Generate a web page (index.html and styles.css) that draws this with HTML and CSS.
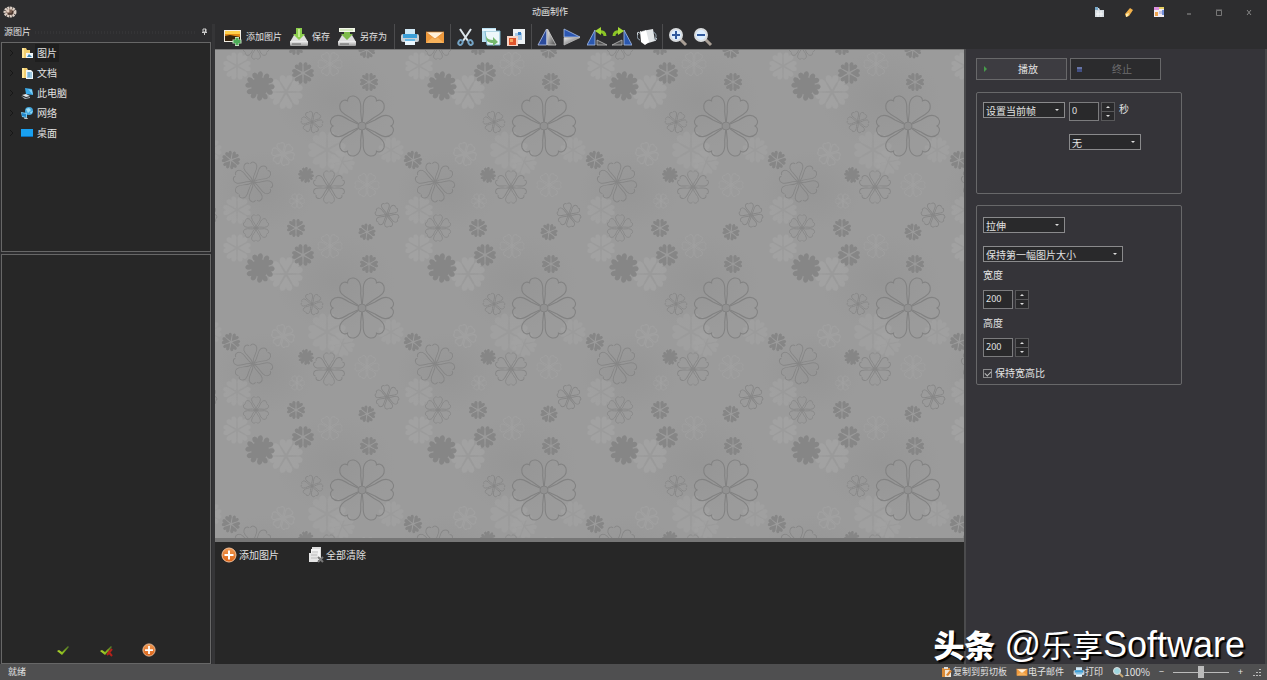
FILE: index.html
```html
<!DOCTYPE html>
<html lang="zh-CN">
<head>
<meta charset="utf-8">
<title>动画制作</title>
<link rel="stylesheet" href="styles.css">
</head>
<body>
<svg class="defs" aria-hidden="true">
  <defs>
    <linearGradient id="silver" x1="0" y1="0" x2="0" y2="1"><stop offset="0" stop-color="#f4f4f4"/><stop offset="1" stop-color="#999"/></linearGradient>
    <linearGradient id="orange" x1="0" y1="0" x2="0" y2="1"><stop offset="0" stop-color="#f09a54"/><stop offset="1" stop-color="#dc6215"/></linearGradient>
    <linearGradient id="half" x1="0" y1="0" x2="1" y2="1"><stop offset="0" stop-color="#eee"/><stop offset="1" stop-color="#444"/></linearGradient>
    <linearGradient id="tick" x1="0" y1="0" x2="1" y2="0"><stop offset="0" stop-color="#b5dc2c"/><stop offset=".6" stop-color="#7fb11d"/><stop offset="1" stop-color="#4c6b2c"/></linearGradient>
    <path id="petal" d="M4 0L17-8C23-14 32-12 31-6C31-3 28-1 25 0C28 1 31 3 31 6C32 12 23 14 17 8Z"/>
    <path id="heart" d="M2 1L13 6C19 10 25 13 30 8C33 4 31 1 29 0C31-1 33-4 30-8C25-13 19-10 13-6L2-1"/>
    <path id="hook" d="M0 0C12-1 14-9 23-10C29-10 32-4 28-1M0 0C12 1 14 9 23 10C29 10 32 4 28 1"/>
    <g id="bloom">
      <use href="#petal"/><use href="#petal" transform="rotate(60)"/><use href="#petal" transform="rotate(120)"/><use href="#petal" transform="rotate(180)"/><use href="#petal" transform="rotate(240)"/><use href="#petal" transform="rotate(300)"/>
    </g>
    <g id="hearts">
      <use href="#heart"/><use href="#heart" transform="rotate(60)"/><use href="#heart" transform="rotate(120)"/><use href="#heart" transform="rotate(180)"/><use href="#heart" transform="rotate(240)"/><use href="#heart" transform="rotate(300)"/>
    </g>
    <g id="sprig">
      <use href="#hook"/><use href="#hook" transform="rotate(60)"/><use href="#hook" transform="rotate(120)"/><use href="#hook" transform="rotate(180)"/><use href="#hook" transform="rotate(240)"/><use href="#hook" transform="rotate(300)"/>
    </g>
    <radialGradient id="shade"><stop offset="0" stop-color="#8e8e8e" stop-opacity=".4"/><stop offset="1" stop-color="#8e8e8e" stop-opacity="0"/></radialGradient>
    <pattern id="flowers" width="182" height="182" patternUnits="userSpaceOnUse">
      <rect width="182" height="182" fill="#9b9b9b"/>
      <ellipse cx="120" cy="50" rx="60" ry="48" fill="url(#shade)"/>
      <ellipse cx="50" cy="141" rx="50" ry="40" fill="url(#shade)"/>
      <g fill="#a6a6a6" opacity=".6">
        <use href="#bloom" transform="translate(22 16) scale(.44)"/>
        <use href="#bloom" transform="translate(71 42) rotate(30) scale(.54)"/>
        <use href="#bloom" transform="translate(112 100) scale(.6)" opacity=".7"/>
        <use href="#bloom" transform="translate(127 112) rotate(20) scale(.4)" opacity=".7"/>
        <use href="#bloom" transform="translate(176 100) scale(.4)" opacity=".7"/>
        <use href="#bloom" transform="translate(-6 100) scale(.4)" opacity=".7"/>
        <use href="#bloom" transform="translate(22 160) scale(.44)" opacity=".8"/>
      </g>
      <g fill="none" stroke="#a6a6a6" opacity=".5">
        <use href="#sprig" transform="translate(68 104) rotate(15) scale(.38)" stroke-width="3"/>
        <use href="#sprig" transform="translate(82 151) scale(.25)" stroke-width="3"/>
        <use href="#sprig" transform="translate(152 135) scale(.4)" stroke-width="2"/>
        <use href="#sprig" transform="translate(115 14) scale(.4)" stroke-width="2"/>
      </g>
      <g fill="#828282" opacity=".85">
        <circle cx="45" cy="36" r="9"/>
        <use href="#bloom" transform="translate(45 36) rotate(18) scale(.46)"/>
        <use href="#bloom" transform="translate(88 23) scale(.35)"/>
        <use href="#bloom" transform="translate(154 32) scale(.29)"/>
        <use href="#bloom" transform="translate(16 110) rotate(10) scale(.29)"/>
        <circle cx="91" cy="125" r="5"/>
        <use href="#bloom" transform="translate(91 125) rotate(20) scale(.25)"/>
        <use href="#bloom" transform="translate(81 178) scale(.29)"/>
        <use href="#bloom" transform="translate(81 -4) scale(.29)"/>
        <use href="#bloom" transform="translate(152 182) rotate(8) scale(.27)"/>
        <use href="#bloom" transform="translate(152 0) rotate(8) scale(.27)"/>
      </g>
      <g fill="none" stroke="#828282">
        <g transform="translate(147 76)" stroke-width="1.1"><use href="#hearts"/><circle r="4" fill="#919191" stroke-width="1"/></g>
        <g opacity=".8">
          <use href="#sprig" transform="translate(38 132) rotate(20) scale(.66)" stroke-width="1.5"/>
          <use href="#sprig" transform="translate(114 137) rotate(30) scale(.54)" stroke-width="1.8"/>
          <use href="#sprig" transform="translate(97 72) rotate(10) scale(.36)" stroke-width="2.4"/>
          <use href="#sprig" transform="translate(172 165) rotate(20) scale(.4)" stroke-width="2.4"/>
          <use href="#sprig" transform="translate(-10 165) rotate(20) scale(.4)" stroke-width="2.4"/>
          <use href="#sprig" transform="translate(41 178) rotate(30) scale(.44)" stroke-width="2"/>
          <use href="#sprig" transform="translate(41 -4) rotate(30) scale(.44)" stroke-width="2"/>
        </g>
      </g>
    </pattern>
    <symbol id="plus" viewBox="0 0 16 16"><circle cx="8" cy="8" r="7" fill="url(#orange)" stroke="#f3c19b"/><path d="M8 3.500v9M3.500 8h9" stroke="#fff" stroke-width="2"/></symbol>
    <symbol id="mail" viewBox="0 0 20 20"><path d="M1 5h18v11H1z" fill="#f09a3c"/><path d="M1 16l7-6h4l7 6z" fill="#f6b25c"/><path d="M1 5h18l-9 7z" fill="#fff0d8" stroke="#dd8429" stroke-width=".7"/></symbol>
    <symbol id="printer" viewBox="0 0 20 20"><path d="M5 2h10v6H5z" fill="#cfe8f6"/><rect x="1" y="7" width="18" height="8" rx="2" fill="#c9d0d6"/><path d="M3 7h14v4H3z" fill="#3c9fd8"/><path d="M5 12h10v6H5z" fill="#eaf7ff"/><path d="M5 12h10v2H5z" fill="#68b8e4"/></symbol>
  </defs>
</svg>
<div class="app">
  <header class="titlebar">
    <svg class="logo" viewBox="0 0 14 14"><ellipse cx="7" cy="7" rx="5" ry="4" fill="#7d6254" stroke="#ddd0c7" stroke-width="3" stroke-dasharray="2 .6"/><circle cx="5" cy="6" r="1.500" fill="#e4cfc1"/><path d="M5 9h4l1-3" stroke="#46332b" stroke-width="1.500" fill="none"/></svg>
    <h1 class="title">动画制作</h1>
    <div class="window-tools">
      <button aria-label="文件"><svg viewBox="0 0 12 12"><path d="M2 2h4l1 2h4v7H2z" fill="#d5dce2"/><path d="M2 1h3v3H2z" fill="#79a9ca"/><path d="M5 5v6M8 5v6M3 8h7" stroke="#f8f8f8"/></svg></button>
      <button aria-label="画笔"><svg viewBox="0 0 12 12"><path d="M2 8l5-6 3 2-4 6-3 1z" fill="#f1b04a"/><path d="M3 8l3-1-1 3-2 1z" fill="#fff0b6"/></svg></button>
      <button aria-label="颜色"><svg viewBox="0 0 12 12"><path d="M1 1h10v10H1z" fill="#f3edf3"/><path d="M1 1h5v3H1z" fill="#dc91df"/><path d="M6 1h5v2H6z" fill="#e6cf63"/><path d="M2 6h3v4H2z" fill="#eda34d"/><path d="M6 5h3v3H6z" fill="#c5c2e6"/><path d="M9 4h2v5H9z" fill="#7390da"/></svg></button>
      <button aria-label="最小化"><svg viewBox="0 0 12 12"><path d="M4 8h4" stroke="#969696"/></svg></button>
      <button aria-label="最大化"><svg viewBox="0 0 12 12"><path d="M3.500 4.500h5v5h-5zM3 4h6" fill="none" stroke="#777"/></svg></button>
      <button aria-label="关闭"><svg viewBox="0 0 12 12"><path d="M4 4l4 5M8 4L4 9" stroke="#868686"/></svg></button>
    </div>
  </header>

  <div class="body">
    <aside class="source">
      <div class="source-head"><h2>源图片</h2><span class="grip"></span><svg class="pin" viewBox="0 0 8 8"><path d="M3 1h3v3H3zM2 4.500h5M4.500 4v3M5.500 1v3" fill="none" stroke="#ccc"/></svg></div>
      <ul class="tree">
        <li><svg class="chev" viewBox="0 0 6 8"><path d="M1 1l3 3-3 3"/></svg><svg class="node" viewBox="0 0 12 12"><path d="M1 1h4l1 2h3v8H1z" fill="#f2cf70"/><path d="M1 1h2v10H1z" fill="#ffe79c"/><path d="M5 6h7v5H5z" fill="#eef6fb"/><path d="M6 10l2-3 3 3z" fill="#3e86b4"/></svg><span class="picked">图片</span></li>
        <li><svg class="chev" viewBox="0 0 6 8"><path d="M1 1l3 3-3 3"/></svg><svg class="node" viewBox="0 0 12 12"><path d="M1 1h5l1 2h3v8H1z" fill="#f2cf70"/><path d="M1 1h2v10H1z" fill="#ffe79c"/><path d="M5 3h5l2 2v7H5z" fill="#eef6fb"/><path d="M6 6h5M6 8h5M6 10h5M8 5v5" stroke="#4f9cca"/></svg><span>文档</span></li>
        <li><svg class="chev" viewBox="0 0 6 8"><path d="M1 1l3 3-3 3"/></svg><svg class="node" viewBox="0 0 12 12"><path d="M4 1l7 1 1 6-7-1z" fill="#38a9e8"/><path d="M7 2l4 1 1 5z" fill="#81d0f6"/><path d="M1 8l4-1 4 2-4 1z" fill="#e5ebef"/><path d="M0 9l5 2 4-1v1l-5 1z" fill="#aebbc5"/></svg><span>此电脑</span></li>
        <li><svg class="chev" viewBox="0 0 6 8"><path d="M1 1l3 3-3 3"/></svg><svg class="node" viewBox="0 0 12 12"><circle cx="8" cy="4" r="4" fill="#43a8df"/><path d="M5 2l3-1 2 2-3 3zM9 5l3-1-2 3z" fill="#9bdcf4"/><path d="M0 5l6 1v5l-5-1z" fill="#79cbf0"/><path d="M1 6l4 1v3l-4-1z" fill="#2187cb"/><path d="M3 11l4 1" stroke="#ddd"/></svg><span>网络</span></li>
        <li><svg class="chev" viewBox="0 0 6 8"><path d="M1 1l3 3-3 3"/></svg><svg class="node" viewBox="0 0 12 12"><path d="M0 2h12v8H0z" fill="#19a0f0"/><path d="M0 9h12v1H0z" fill="#0b6eb8"/></svg><span>桌面</span></li>
      </ul>
      <div class="thumbs">
        <button aria-label="选中"><svg viewBox="0 0 14 14"><path d="M1 8l2-1 3 2 6-6 1 1-7 8z" fill="url(#tick)"/></svg></button>
        <button aria-label="取消选中"><svg viewBox="0 0 14 14"><path d="M8 7l5 6M8 12l5-6" stroke="#b3221b" stroke-width="2"/><path d="M1 8l2-1 3 2 6-6 1 1-7 8z" fill="url(#tick)"/></svg></button>
        <button aria-label="添加"><svg viewBox="0 0 16 16"><use href="#plus"/></svg></button>
      </div>
    </aside>

    <div class="work">
      <nav class="toolbar">
        <button class="named"><svg viewBox="0 0 20 20"><path d="M1 3h17v12H1z" fill="#f3efe5"/><path d="M2 4h15v10H2z" fill="#e28b16"/><path d="M2 4h15v3H2z" fill="#ffd04b"/><path d="M2 9l5-1 10 2v4H2z" fill="#35230d"/><path d="M14 10v9M9.500 14.500h9" stroke="#c5dfc1" stroke-width="4"/><path d="M14 11v7M10.500 14.500h7" stroke="#4dad58" stroke-width="3"/></svg>添加图片</button>
        <button class="named"><svg viewBox="0 0 20 20"><path d="M5 8h10l4 7H1z" fill="#dedede"/><rect x="1" y="14" width="18" height="5" rx="1" fill="url(#silver)"/><path d="M3 17h9" stroke="#666"/><path d="M7 1h6v6h3l-6 6-6-6h3z" fill="#8bce4c"/><path d="M9 2h2v8H9z" fill="#c2ec8e"/></svg>保存</button>
        <button class="named"><svg viewBox="0 0 20 20"><path d="M5 8h10l4 7H1z" fill="#dedede"/><rect x="1" y="14" width="18" height="5" rx="1" fill="url(#silver)"/><path d="M3 17h9" stroke="#666"/><path d="M7 4h6v3h3l-6 6-6-6h3z" fill="#7dbb49"/><path d="M2 1h16v4H2z" fill="#f2f6e9"/><path d="M3 3h13" stroke="#b7d993"/></svg>另存为</button>
        <i class="sep"></i>
        <button aria-label="打印"><svg viewBox="0 0 20 20"><use href="#printer"/></svg></button>
        <button aria-label="电子邮件"><svg viewBox="0 0 20 20"><use href="#mail"/></svg></button>
        <i class="sep"></i>
        <button aria-label="剪切"><svg viewBox="0 0 20 20"><path d="M4 2l8 12M15 2L7 14" stroke="#dce6ec" stroke-width="2"/><g fill="none" stroke="#75a4c5" stroke-width="2"><ellipse cx="4.500" cy="15.500" rx="2" ry="2.500" transform="rotate(30 4.500 15.500)"/><ellipse cx="14.500" cy="15.500" rx="2" ry="2.500" transform="rotate(-30 14.500 15.500)"/></g></svg></button>
        <button aria-label="复制"><svg viewBox="0 0 20 20"><path d="M1 1h14v14H1z" fill="#b9dff0"/><path d="M4 4h15v14H6z" fill="#edf7fa" stroke="#7db8d0"/><path d="M1 2h14v2H1z" fill="#e7f7ff"/><path d="M5 9c1 3 4 4 7 4v-3l5 5-5 4v-3c-5 0-7-2-7-7z" fill="#75b96d"/></svg></button>
        <button aria-label="粘贴"><svg viewBox="0 0 20 20"><path d="M7 2h12v15H7z" fill="#edf2f5"/><path d="M9 6h7v7H9z" fill="#a9cbe9"/><path d="M12 5h3v3h-3z" fill="#387fc5"/><path d="M1 9h11v10H1z" fill="#f6d4c6"/><path d="M3 11h7v7H3z" fill="#e0552b"/><path d="M4 12h3v3H4z" fill="#f7a65e"/></svg></button>
        <i class="sep"></i>
        <button aria-label="水平翻转"><svg viewBox="0 0 20 20"><path d="M9.500 2v16H1z" fill="#2b4b9c" stroke="#b9c6e8" stroke-width=".8"/><path d="M10.500 2v16H19z" fill="url(#half)" stroke="#ccc" stroke-width=".8"/></svg></button>
        <button aria-label="垂直翻转"><svg viewBox="0 0 20 20"><path d="M2 2l16 8H2z" fill="#2c57b2" stroke="#a8bfe9" stroke-width=".8"/><path d="M2 10.500h16L2 18z" fill="url(#half)" stroke="#bbb" stroke-width=".8"/></svg></button>
        <button aria-label="向左旋转"><svg viewBox="0 0 20 20"><path d="M8 3v15H0z" fill="#2b58af" stroke="#a8bfe9" stroke-width=".8"/><path d="M10 13v5h10z" fill="#555" stroke="#bbb" stroke-width=".8"/><path d="M18 9c0-3-2-5-6-4" fill="none" stroke="#8bc526" stroke-width="3"/><path d="M14 0v8L8 4z" fill="#a5da35"/></svg></button>
        <button aria-label="向右旋转"><svg viewBox="0 0 20 20"><path d="M12 3v15h8z" fill="#2b58af" stroke="#a8bfe9" stroke-width=".8"/><path d="M10 13v5H0z" fill="#555" stroke="#bbb" stroke-width=".8"/><path d="M2 9c0-3 2-5 6-4" fill="none" stroke="#8bc526" stroke-width="3"/><path d="M6 0v8l6-4z" fill="#a5da35"/></svg></button>
        <button aria-label="任意旋转"><svg viewBox="0 0 20 20"><path d="M5 4l11-2 2 12-10 3z" fill="#e1e4e6"/><path d="M3 4l3 1 3-2 3 12-4 3-4-3z" fill="#fff"/><path d="M3 13c-3-1-3-4-2-6M16 5c3 1 4 4 2 7" fill="none" stroke="#a3b4c1"/><path d="M0 8l1-3 3 2M16 11l2 3 2-3" fill="none" stroke="#d4dce2"/></svg></button>
        <i class="sep"></i>
        <button aria-label="放大"><svg viewBox="0 0 20 20"><path d="M12 12l6 6" stroke="#a99f95" stroke-width="3"/><circle cx="8" cy="8" r="6" fill="#dceeff" stroke="#d9dcde" stroke-width="2"/><path d="M8 4v8M4 8h8" stroke="#315a9d" stroke-width="2"/></svg></button>
        <button aria-label="缩小"><svg viewBox="0 0 20 20"><path d="M12 12l6 6" stroke="#a99f95" stroke-width="3"/><circle cx="8" cy="8" r="6" fill="#dceeff" stroke="#d9dcde" stroke-width="2"/><path d="M4 8h8" stroke="#315a9d" stroke-width="2"/></svg></button>
      </nav>
      <div class="stage">
        <main class="center">
          <div class="canvas"><svg width="100%" height="100%"><rect width="100%" height="100%" fill="url(#flowers)"/></svg></div>
          <section class="frames">
            <button><svg viewBox="0 0 16 16"><use href="#plus"/></svg>添加图片</button>
            <button><svg viewBox="0 0 16 16"><path d="M4 0h9v12H4z" fill="#ddd"/><path d="M3 2h9v11H3z" fill="#f3f3f3"/><path d="M1 6h9v9H1z" fill="#e5e5e5"/><path d="M4 5h6M3 8h6M3 11h6" stroke="#bbb"/><path d="M10 10l5 5M15 10l-5 5" stroke="#777" stroke-width="2"/></svg>全部清除</button>
          </section>
        </main>
        <aside class="props">
          <div class="playback">
            <button><svg viewBox="0 0 8 8"><path d="M2 1l3 3-3 3z" fill="#469b4a"/></svg><span>播放</span></button>
            <button disabled><svg viewBox="0 0 8 8"><path d="M1 2h5v5H1z" fill="#424f83"/><path d="M1 2h5v2H1z" fill="#6674a5"/></svg><span>终止</span></button>
          </div>
          <section class="box timing">
            <div class="line">
              <span class="pick"><select class="mid" aria-label="帧范围"><option>设置当前帧</option></select></span>
              <span class="spin"><input id="sec" value="0"><span class="steps"><button aria-label="增加"></button><button aria-label="减少"></button></span></span>
              <label for="sec">秒</label>
            </div>
            <span class="pick effect"><select class="small" aria-label="效果"><option>无</option></select></span>
          </section>
          <section class="box sizing">
            <span class="pick"><select class="mid" aria-label="缩放方式"><option>拉伸</option></select></span>
            <span class="pick keep"><select class="wide" aria-label="尺寸"><option>保持第一幅图片大小</option></select></span>
            <label for="w">宽度</label>
            <span class="spin"><input id="w" value="200"><span class="steps"><button aria-label="增加宽度"></button><button aria-label="减少宽度"></button></span></span>
            <label for="h">高度</label>
            <span class="spin"><input id="h" value="200"><span class="steps"><button aria-label="增加高度"></button><button aria-label="减少高度"></button></span></span>
            <label class="ratio"><input type="checkbox" checked>保持宽高比</label>
          </section>
        </aside>
      </div>
    </div>
  </div>

  <footer class="status">
    <span>就绪</span>
    <div class="status-tools">
      <button><svg viewBox="0 0 12 12"><path d="M1 2h8v9H1z" fill="#d98b38"/><path d="M3 1h4v2H3z" fill="#ddd"/><path d="M4 4h6v7H4z" fill="#f3e6d5"/><path d="M5 9l4-5 2 1-4 5z" fill="#d9812b"/></svg>复制到剪切板</button>
      <button><svg viewBox="0 0 12 12"><use href="#mail"/></svg>电子邮件</button>
      <button><svg viewBox="0 0 12 12"><use href="#printer"/></svg>打印</button>
      <button class="percent"><svg viewBox="0 0 12 12"><path d="M7 7l4 4" stroke="#c9a672" stroke-width="2"/><circle cx="5" cy="5" r="3.500" fill="#9fd6df" stroke="#ddd"/></svg>100%</button>
      <button class="step">−</button>
      <input class="zoom" type="range" aria-label="缩放" value="50">
      <button class="step">+</button>
      <svg class="size-grip" viewBox="0 0 12 12"><path d="M8 3v1M5 6v1M8 6v1M2 9v1M5 9v1M8 9v1" stroke="#bbb" stroke-width="2"/></svg>
    </div>
  </footer>
  <div class="watermark"><b>头条</b><span class="latin">@</span><span>乐享</span><span class="latin">Software</span></div>
</div>
</body>
</html>
```
FILE: styles.css
```css
* { box-sizing: border-box; }
body {
  margin: 0;
  background: #2d2d2f;
  color: #e2e2e2;
  font: 10px/14px "Noto Sans CJK SC", sans-serif;
}
button, input, select { font: inherit; color: inherit; border-radius: 0; }
button { padding: 0; border: 0; background: none; }
h1, h2, ul { margin: 0; padding: 0; font-size: inherit; font-weight: 400; list-style: none; }
svg { display: block; flex: none; }
.defs { position: absolute; width: 0; height: 0; }

.app { position: relative; display: flex; flex-direction: column; min-height: 100vh; }
.titlebar { display: grid; grid-template-columns: 1fr auto 1fr; align-items: center; height: 24px; padding: 0 12px 0 3px; }
.logo { width: 14px; height: 14px; }
.title { padding-right: 158px; font-size: 9px; }
.window-tools { display: flex; justify-content: flex-end; gap: 18px; }
.window-tools svg { width: 12px; height: 12px; }

.body { display: flex; flex: 1; }
.source { display: flex; flex-direction: column; flex: none; width: 212px; padding: 0 1px; }
.source-head { display: flex; align-items: center; gap: 4px; height: 18px; padding: 0 3px 2px; font-size: 9px; }
.grip { flex: 1; height: 3px; background: repeating-linear-gradient(90deg, #343436 0 1px, transparent 1px 3px); }
.pin { width: 8px; height: 8px; }
.tree { height: 210px; margin-bottom: 2px; padding-left: 7px; border: 1px solid #676767; background: #272727; }
.tree li { display: flex; align-items: center; height: 20px; }
.chev { width: 6px; height: 8px; margin-right: 6px; fill: none; stroke: #171717; }
.node { width: 12px; height: 12px; margin-right: 2px; }
.tree span { padding: 2px; }
.picked { background: #1e1e1e; }
.thumbs { display: flex; flex: 1; align-items: flex-end; gap: 29px; padding: 0 0 6px 54px; border: 1px solid #676767; background: #272727; }
.thumbs svg { width: 14px; height: 14px; }

.work { display: flex; flex-direction: column; flex: 1; min-width: 0; border-left: 3px solid #353537; }
.toolbar { display: flex; align-items: center; gap: 5px; height: 25px; padding-left: 8px; font-size: 9px; }
.toolbar button { display: flex; align-items: center; gap: 3px; }
.toolbar .named { padding-right: 2px; }
.toolbar svg { width: 20px; height: 20px; }
.sep { width: 1px; height: 25px; background: #4c4c4e; }
.stage { display: flex; flex: 1; }
.center { display: flex; flex: 1; flex-direction: column; min-width: 0; border-top: 1px solid #777; }
.canvas { position: relative; flex: 1; border-bottom: 4px solid #777; background: #9b9b9b; }
.canvas svg { position: absolute; inset: 0; }
.frames { display: flex; align-items: flex-start; gap: 29px; height: 122px; padding: 5px 6px; background: #272727; }
.frames button { display: flex; align-items: center; gap: 2px; }
.frames svg { width: 16px; height: 16px; }

.props { flex: none; width: 303px; padding: 9px 12px 9px 10px; border-left: 2px solid #4b4b4d; border-right: 2px solid #454547; background: #353439; }
.playback { display: flex; gap: 3px; margin-bottom: 12px; }
.playback button { display: flex; align-items: center; width: 91px; height: 22px; padding-left: 5px; border: 1px solid #68686a; background: #3d3c41; }
.playback svg { width: 8px; height: 8px; }
.playback span { flex: 1; text-align: center; }
.playback button:disabled { background: #2b2b2d; color: #6e6e70; }
.box { width: 206px; margin-bottom: 11px; padding: 9px 6px; border: 1px solid #68686a; border-radius: 2px; }
.timing { min-height: 102px; }
.line { display: flex; gap: 4px; }
.pick { position: relative; display: block; width: max-content; }
.pick::after { content: ""; position: absolute; right: 6px; top: 7px; border: 2px solid transparent; border-top-color: #ddd; }
select { display: block; height: 16px; padding: 0 2px; border: 1px solid #8a8a8c; background: #29292b; line-height: 13px; appearance: none; }
.mid { width: 82px; }
.small { width: 72px; }
.wide { width: 140px; }
.effect { margin: 13px 0 0 86px; }
.spin { display: flex; gap: 2px; }
.spin input { width: 30px; height: 19px; padding: 0 2px 3px; border: 1px solid #7c7c7e; background: #29292b; font-family: "Noto Sans", sans-serif; font-size: 9px; }
.steps { display: grid; grid-template-rows: 8px 9px; width: 14px; height: 19px; border: 1px solid #58585a; background: #29292b; }
.steps button { display: grid; place-items: center; }
.steps button + button { border-top: 1px solid #58585a; }
.steps button::after { content: ""; border: 2px solid transparent; border-top: 0; border-bottom-color: #ddd; }
.steps button + button::after { border-top: 2px solid #ddd; border-bottom: 0; }
.sizing { display: flex; flex-direction: column; align-items: flex-start; min-height: 180px; padding: 11px 6px 3px; margin: 0; }
.keep { margin: 13px 0 6px; }
.sizing > .spin { margin: 8px 0 7px; }
.ratio { display: flex; align-items: center; gap: 3px; margin-top: 2px; }
.ratio input { width: 9px; height: 9px; margin: 0; border: 1px solid #8a8a8c; appearance: none; display: grid; place-items: center; }
.ratio input:checked::after { content: ""; width: 5px; height: 3px; border: solid #bbb; border-width: 0 0 1px 1px; transform: rotate(-45deg); }

.status { display: flex; align-items: center; justify-content: space-between; height: 16px; padding: 0 3px 0 8px; background: #4f4f50; font-size: 9px; }
.status-tools { display: flex; align-items: center; gap: 9px; }
.status-tools button { display: flex; align-items: center; }
.status-tools svg { width: 12px; height: 12px; }
.status-tools .percent { font-size: 10px; }
.zoom { width: 56px; height: 12px; margin: 0; appearance: none; background: linear-gradient(#bbb, #bbb) center / 100% 1px no-repeat; }
.zoom::-webkit-slider-thumb { width: 6px; height: 12px; appearance: none; background: #bbb; }
.watermark { position: absolute; right: 22px; bottom: 14px; display: flex; align-items: baseline; color: #fff; font-size: 31px; line-height: 42px; text-shadow: 2px 2px 1px #000; }
.watermark b { margin-right: 9px; font-weight: 900; }
.latin { font-family: "Liberation Sans", sans-serif; font-size: 36px; }
```
